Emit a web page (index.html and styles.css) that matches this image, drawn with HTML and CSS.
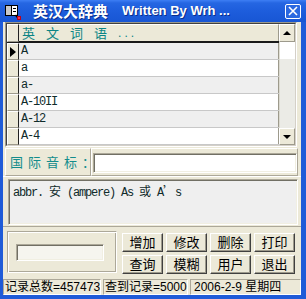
FILE: index.html
```html
<!DOCTYPE html>
<html lang="zh">
<head>
<meta charset="utf-8">
<title>英汉大辞典</title>
<link rel="stylesheet" href="styles.css">
</head>
<body>
<div class="win">
  <div class="titlebar">
    <svg class="icon" width="17" height="16" viewBox="0 0 17 16">
      <rect x="0.5" y="1.5" width="12" height="10" fill="#fff" stroke="#000"/>
      <rect x="1" y="2" width="5" height="9" fill="#c8c8c8"/>
      <line x1="6.5" y1="2" x2="6.5" y2="11" stroke="#000"/>
      <line x1="8" y1="4.5" x2="11" y2="4.5" stroke="#000"/>
      <line x1="8" y1="7.5" x2="11" y2="7.5" stroke="#000"/>
      <line x1="10.5" y1="11" x2="12.5" y2="13.5" stroke="#000" stroke-width="1.5"/>
      <rect x="12" y="12" width="4" height="4" fill="#c00018"/>
      <rect x="13" y="13" width="2" height="2" fill="#ff3048"/>
    </svg>
    <div class="title"><span class="cn">英汉大辞典</span><span class="en">Written By Wrh ...</span></div>
    <div class="close"><svg width="10" height="10" viewBox="0 0 10 10"><path d="M1 1L9 9M9 1L1 9" stroke="#fff" stroke-width="1.6"/></svg></div>
  </div>
  <div class="client">
    <div class="grid">
      <div class="grid-in">
        <div class="cells">
          <div class="row head">
            <div class="ind"></div>
            <div class="cell hcell"><span>英</span><span>文</span><span>词</span><span>语</span><span class="dots">...</span></div>
          </div>
          <div class="row alt"><div class="ind"><span class="cur"></span></div><div class="cell">A</div></div>
          <div class="row"><div class="ind"></div><div class="cell">a</div></div>
          <div class="row alt"><div class="ind"></div><div class="cell">a-</div></div>
          <div class="row"><div class="ind"></div><div class="cell">A-10II</div></div>
          <div class="row alt"><div class="ind"></div><div class="cell">A-12</div></div>
          <div class="row"><div class="ind"></div><div class="cell">A-4</div></div>
        </div>
        <div class="vscroll">
          <div class="sbtn"><span class="up"></span></div>
          <div class="thumb"></div>
          <div class="track"></div>
          <div class="sbtn down-btn"><span class="down"></span></div>
        </div>
      </div>
    </div>
    <div class="phon">
      <div class="lbl-panel">国际音标：</div>
      <div class="inp-panel"><div class="edit wide"></div></div>
    </div>
    <div class="memo-panel">
      <div class="memo">abbr. <span class="cj">安</span> (ampere) As <span class="cj">或</span> A<span class="cj">’</span>s</div>
    </div>
    <div class="bottom">
      <div class="group"><div class="edit small"></div></div>
      <div class="buttons">
        <div class="btn">增加</div>
        <div class="btn">修改</div>
        <div class="btn">删除</div>
        <div class="btn">打印</div>
        <div class="btn">查询</div>
        <div class="btn">模糊</div>
        <div class="btn">用户</div>
        <div class="btn">退出</div>
      </div>
    </div>
    <div class="status">
      <div class="sp sp1">记录总数=457473</div>
      <div class="sp sp2">查到记录=5000</div>
      <div class="sp sp3">2006-2-9 星期四</div>
    </div>
  </div>
</div>
</body>
</html>
```
FILE: styles.css
```css
* { box-sizing: border-box; }
html, body { margin: 0; padding: 0; }
body {
  width: 306px;
  height: 299px;
  overflow: hidden;
  background: #1f5bd8;
  font-family: "Liberation Sans", "Noto Sans CJK SC", sans-serif;
}
.win { display: flex; flex-direction: column; height: 299px; }

.titlebar {
  height: 22px;
  display: flex;
  align-items: center;
  padding: 0 5px 0 5px;
  background: linear-gradient(#3d7ef4 0, #2566e2 3px, #1d5ddc 50%, #1856d4 100%);
}
.icon { flex: none; margin-right: 11px; margin-top: 1px; }
.title {
  flex: 1;
  color: #fff;
  font-weight: bold;
  white-space: nowrap;
  text-shadow: 1px 1px 0 #0a2f8c;
  display: flex;
  align-items: center;
}
.title .cn { font-family: "Noto Sans CJK SC", sans-serif; font-size: 15px; line-height: 18px; }
.title .en { font-size: 13px; margin-left: 14px; line-height: 18px; }
.close {
  width: 16px;
  height: 15px;
  border: 1px solid #fff;
  border-radius: 2px;
  display: flex;
  align-items: center;
  justify-content: center;
  background: #2a68e0;
}

.client {
  margin: 0 5px 4px 3px;
  height: 273px;
  background: #ece9d8;
  display: flex;
  flex-direction: column;
}

/* grid */
.grid {
  margin: 0 4px 0 2px;
  height: 125px;
  border: 1px solid;
  border-color: #9d9a8c #fff #fff #9d9a8c;
}
.grid-in {
  height: 100%;
  border: 1px solid;
  border-color: #404040 #d4d0c8 #d4d0c8 #404040;
  display: flex;
  background: #fff;
}
.cells { flex: 1; display: flex; flex-direction: column; }
.row {
  height: 17px;
  display: flex;
  background: #fff;
  border-bottom: 1px solid #c8c8c8;
}
.row.alt { background: #efefef; }
.row.head {
  height: 19px;
  background: #ece9d8;
  border-bottom: 2px solid #1a1a1a;
}
.ind {
  width: 12px;
  flex: none;
  background: #ece9d8;
  border-top: 1px solid #fff;
  border-left: 1px solid #fff;
  border-right: 1px solid #222;
  border-bottom: 1px solid #9d9a8c;
  display: flex;
  align-items: center;
}
.row .ind { margin-bottom: -1px; }
.cur {
  width: 0;
  height: 0;
  border-top: 5px solid transparent;
  border-bottom: 5px solid transparent;
  border-left: 6px solid #000;
  margin-left: 2px;
}
.cell {
  flex: 1;
  padding-left: 2px;
  font-family: "Liberation Mono", monospace;
  font-size: 12px;
  letter-spacing: -1.2px;
  color: #0f2b2b;
  line-height: 16px;
  border-right: 1px solid #9d9a8c;
}
.hcell {
  display: flex;
  align-items: center;
  font-family: "Noto Sans CJK SC", sans-serif;
  font-size: 13px;
  letter-spacing: 0;
  color: #0b8585;
  gap: 11px;
  padding-left: 3px;
  border-top: 1px solid #fff;
}
.hcell .dots { font-family: "Liberation Sans", sans-serif; letter-spacing: 3px; font-size: 12px; }

.vscroll {
  width: 16px;
  flex: none;
  display: flex;
  flex-direction: column;
  background: #ece9d8;
}
.sbtn {
  height: 18px;
  display: flex;
  align-items: center;
  justify-content: center;
  background: #ece9d8;
  border-top: 1px solid #fff;
  border-left: 1px solid #fff;
  border-right: 1px solid #9d9a8c;
  border-bottom: 1px solid #9d9a8c;
}
.down-btn { height: 17px; }
.up, .down { width: 0; height: 0; border-left: 4px solid transparent; border-right: 4px solid transparent; }
.up { border-bottom: 4px solid #000; }
.down { border-top: 4px solid #000; }
.thumb { height: 17px; background: #fff; border-left: 1px solid #e2e0d6; }
.track { flex: 1; background: #ebebe6; border-left: 1px solid #dcdad0; }

/* phonetic */
.phon {
  display: flex;
  margin: 1px 3px 0 2px;
  height: 28px;
}
.lbl-panel, .inp-panel {
  border: 1px solid;
  border-color: #fff #aca899 #aca899 #fff;
}
.lbl-panel {
  width: 86px;
  font-family: "Noto Sans CJK SC", sans-serif;
  font-size: 13px;
  letter-spacing: 5px;
  color: #138c8c;
  padding-left: 4px;
  line-height: 25px;
  white-space: nowrap;
}
.inp-panel { flex: 1; padding: 4px 0 0 1px; }
.edit {
  background: #fff;
  border: 1px solid;
  border-color: #aca899 #fff #fff #aca899;
  box-shadow: inset 1px 1px 0 #716f64, inset -1px -1px 0 #f1efe2;
}
.edit.wide { height: 20px; width: 204px; }

/* memo */
.memo-panel {
  height: 50px;
  padding: 2px 3px 2px 5px;
  border-top: 1px solid #fff;
}
.memo {
  height: 46px;
  background: #efefef;
  border: 1px solid;
  border-color: #aca899 #fff #fff #aca899;
  box-shadow: inset 1px 1px 0 #716f64, inset -1px -1px 0 #f1efe2;
  padding: 4px 0 0 4px;
  font-family: "Liberation Mono", monospace;
  font-size: 12px;
  letter-spacing: -1.2px;
  color: #0f2b2b;
  line-height: 14px;
  white-space: nowrap;
}
.memo .cj { font-family: "Noto Sans CJK SC", sans-serif; letter-spacing: 0; font-size: 12px; }

/* bottom */
.bottom {
  height: 53px;
  display: flex;
  align-items: flex-start;
  border-top: 1px solid #aca899;
}
.group {
  margin: 4px 0 0 4px;
  width: 110px;
  height: 42px;
  border: 1px solid;
  border-color: #aca899 #fff #fff #aca899;
  box-shadow: inset 1px 1px 0 #fff, inset -1px -1px 0 #aca899;
  padding: 12px 0 0 8px;
}
.edit.small { width: 88px; height: 17px; background: #f6f5ef; }
.buttons {
  margin: 6px 0 0 5px;
  display: grid;
  grid-template-columns: repeat(4, 41px);
  grid-auto-rows: 19px;
  column-gap: 3px;
  row-gap: 3px;
}
.btn {
  background: #ece9d8;
  border: 1px solid;
  border-color: #fff #404040 #404040 #fff;
  box-shadow: inset -1px -1px 0 #9d9a8c;
  font-family: "Noto Sans CJK SC", sans-serif;
  font-size: 13px;
  line-height: 16px;
  text-align: center;
  color: #000;
}

/* status */
.status {
  height: 16px;
  display: flex;
  gap: 2px;
}
.sp {
  height: 16px;
  border: 1px solid;
  border-color: #aca899 #fff #fff #aca899;
  font-size: 12px;
  line-height: 14px;
  color: #000;
  padding-left: 1px;
  white-space: nowrap;
  overflow: hidden;
}
.sp1 { width: 98px; flex: none; }
.sp2 { width: 85px; flex: none; }
.sp3 { flex: 1; min-width: 0; padding-left: 3px; }
```
